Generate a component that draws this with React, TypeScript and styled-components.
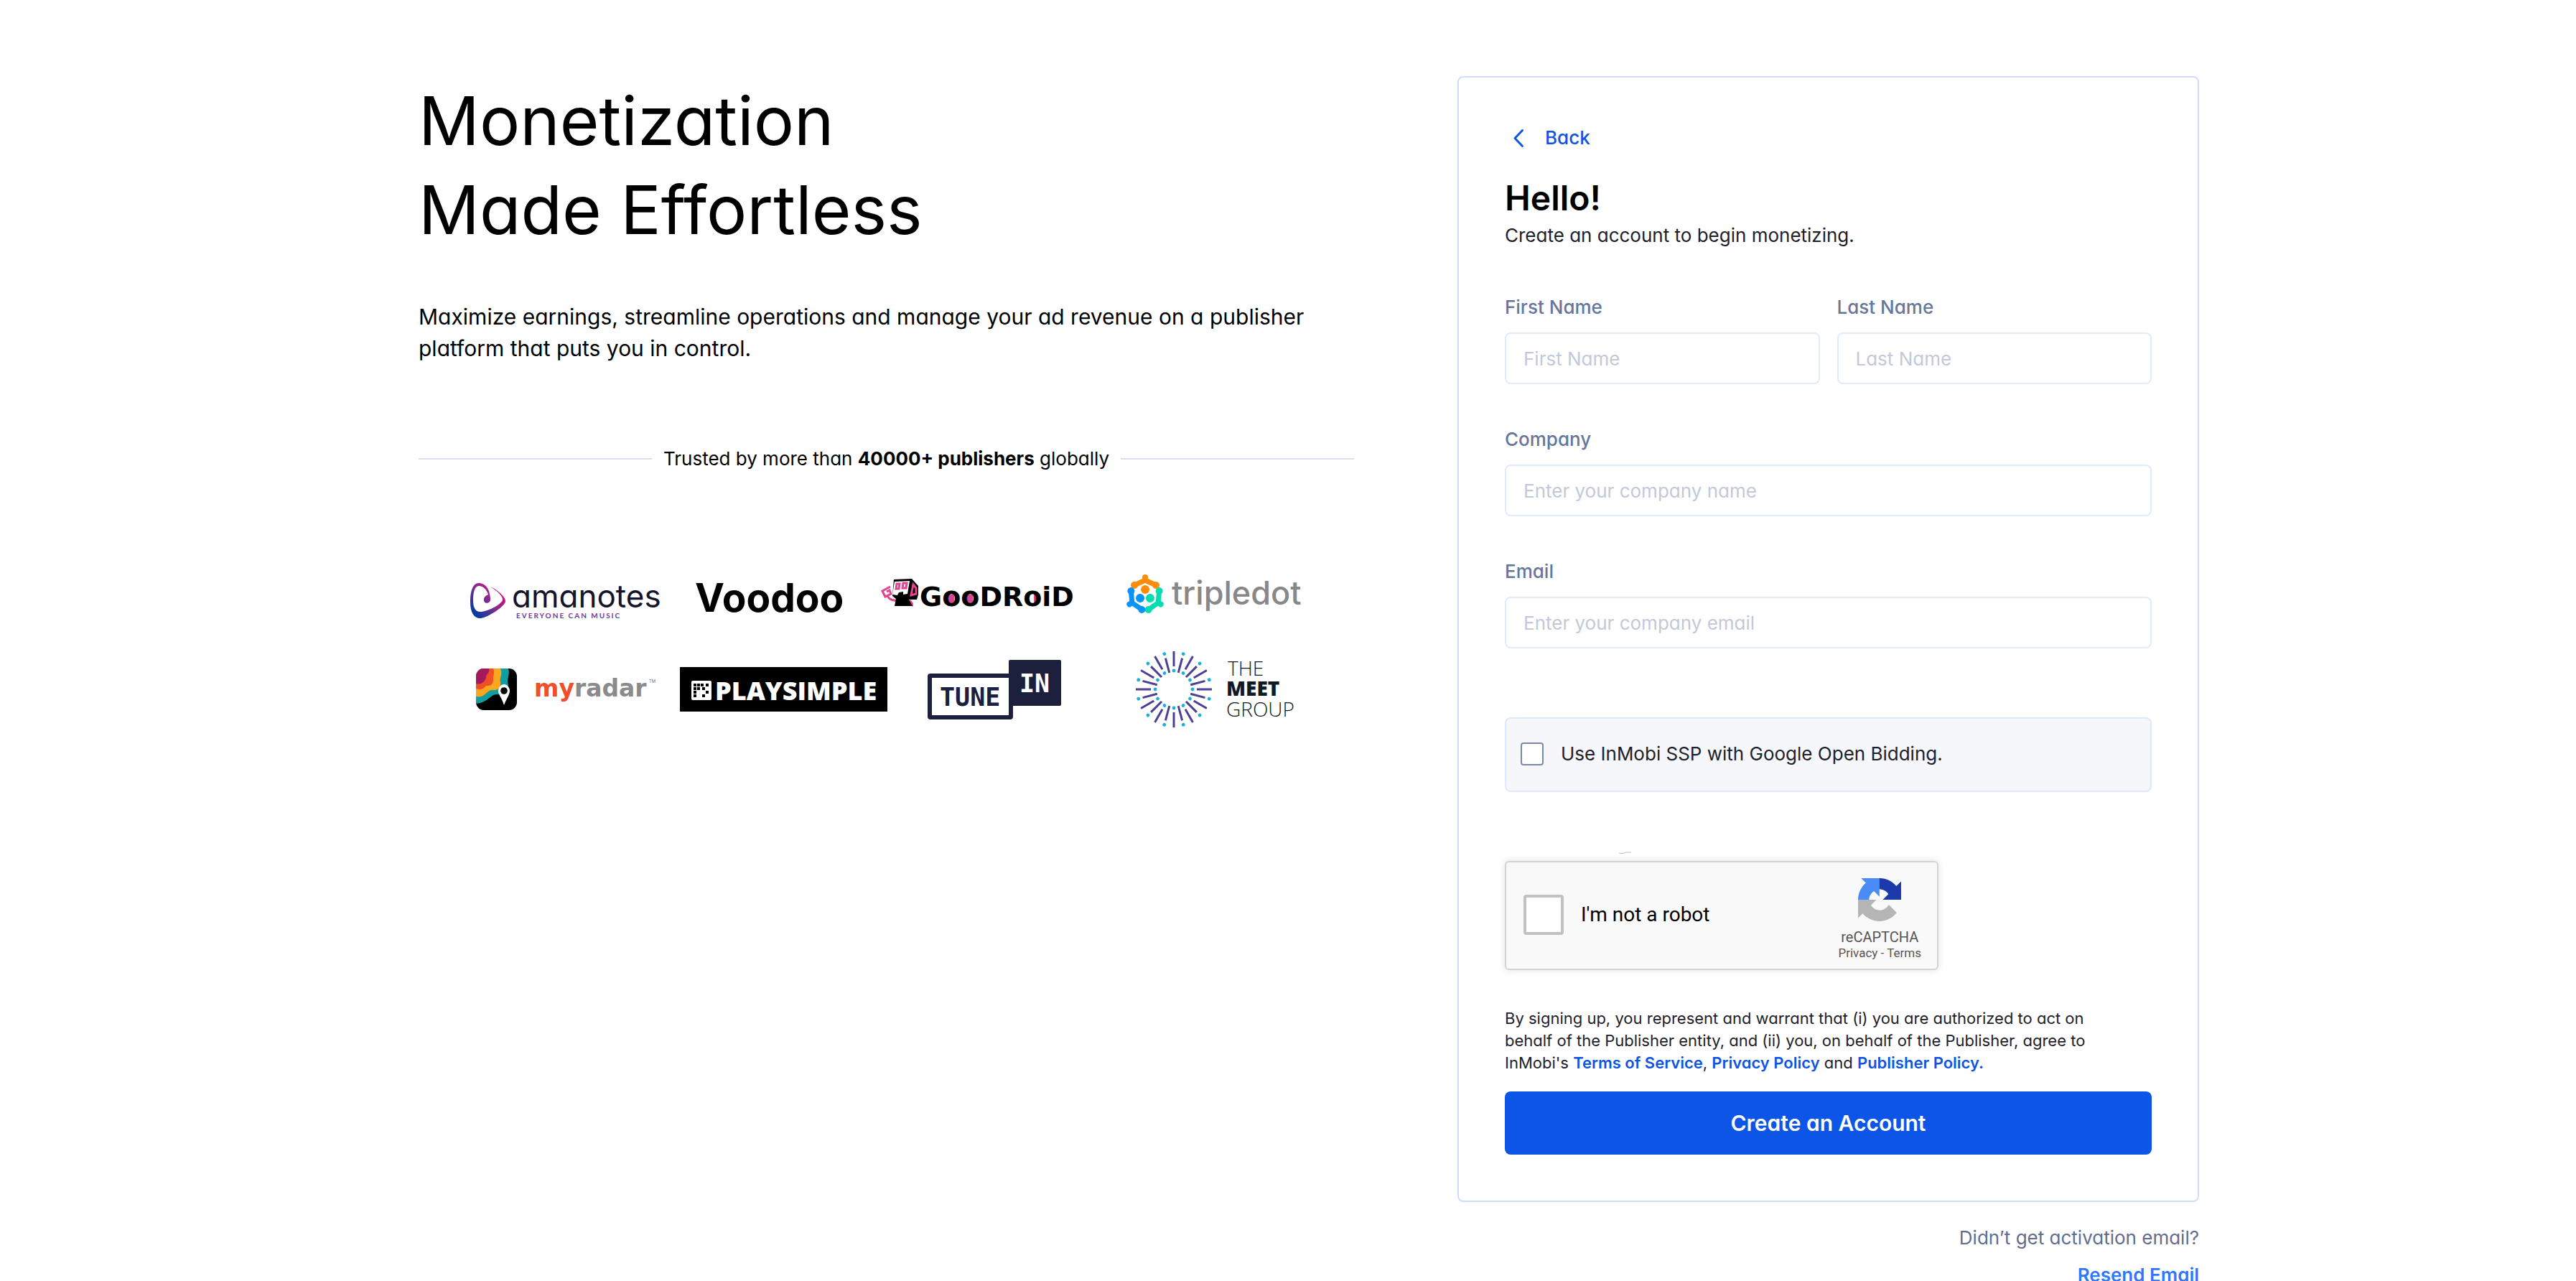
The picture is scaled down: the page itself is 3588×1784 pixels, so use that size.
import React from "react";
import styled, { createGlobalStyle } from "styled-components";

const GlobalStyle = createGlobalStyle`
  *, *::before, *::after { box-sizing: border-box; }
  body {
    margin: 0;
    background: #fff;
    color: #000;
    font-family: Inter, "Liberation Sans", sans-serif;
    font-feature-settings: "cv11";
    font-size: 26px;
    line-height: 40px;
  }
  h1, h2, p { margin: 0; }
`;

const Page = styled.main`
  display: grid;
  grid-template-columns: minmax(0, 1303fr) minmax(0, 1033fr);
  column-gap: 144px;
  max-width: 2538px;
  margin: 0 auto;
  padding: 106px 0 0 58px;
  align-items: start;
`;

const Intro = styled.section`
  display: flex;
  flex-direction: column;
`;

const Headline = styled.h1`
  font-size: 94px;
  font-weight: 400;
  line-height: 124px;
`;

const Lead = styled.p`
  margin-top: 65px;
  font-size: 30px;
  line-height: 44px;
`;

const Trusted = styled.p`
  display: flex;
  align-items: center;
  gap: 16px;
  margin-top: 112px;
  white-space: nowrap;

  &::before,
  &::after {
    content: "";
    flex: 1;
    height: 2px;
    background: #dcdeea;
  }
`;

const LogoGrid = styled.div`
  display: grid;
  grid-template-columns: repeat(4, 300px);
  justify-content: center;
  row-gap: 10px;
  margin-top: 111px;
`;

const LogoArt = styled.svg`
  display: block;
  width: 100%;
  overflow: visible;
`;

const Card = styled.form`
  display: flex;
  flex-direction: column;
  padding: 64px;
  border: 2px solid #d0dcfd;
  border-radius: 8px;
`;

const BackLink = styled.a`
  display: flex;
  align-items: center;
  gap: 20px;
  align-self: flex-start;
  padding-left: 4px;
  color: #0d55e6;
  font-weight: 500;
  text-decoration: none;
`;

const Greeting = styled.h2`
  margin-top: 36px;
  font-size: 48px;
  font-weight: 600;
  line-height: 56px;
`;

const Subtitle = styled.p`
  margin-top: 4px;
  color: #1d212c;
`;

const Fields = styled.div`
  display: grid;
  grid-template-columns: 1fr 1fr;
  gap: 57px 24px;
  margin-top: 60px;
`;

const FieldBox = styled.div<{ $wide?: boolean }>`
  display: flex;
  flex-direction: column;
  gap: 15px;
  grid-column: ${(p) => (p.$wide ? "1 / -1" : "auto")};
`;

const FieldLabel = styled.label`
  color: #67769b;
  font-weight: 500;
`;

const TextInput = styled.input`
  width: 100%;
  height: 72px;
  padding: 0 24px;
  border: 2px solid #e2eafd;
  border-radius: 8px;
  background: #fff;
  color: #1d212c;
  font: inherit;
  font-feature-settings: inherit;

  &::placeholder {
    color: #c2c9d8;
    opacity: 1;
  }
`;

const BiddingOption = styled.label`
  display: flex;
  align-items: center;
  gap: 24px;
  height: 104px;
  margin-top: 96px;
  padding: 0 20px 2px;
  border: 2px solid #dfe8fd;
  border-radius: 8px;
  background: #f5f7fb;
  color: #1d212c;
`;

const Tick = styled.input<{ $large?: boolean }>`
  appearance: none;
  flex: none;
  width: ${(p) => (p.$large ? 56 : 32)}px;
  height: ${(p) => (p.$large ? 56 : 32)}px;
  margin: 0;
  border: ${(p) => (p.$large ? "4px solid #c1c1c1" : "2px solid #7b89a9")};
  border-radius: 4px;
  background: #fff;
`;

const Captcha = styled.div`
  position: relative;
  display: flex;
  align-items: center;
  justify-content: space-between;
  width: 604px;
  max-width: 100%;
  height: 152px;
  margin-top: 96px;
  padding: 0 22px 0 24px;
  border: 2px solid #d3d3d3;
  border-radius: 6px;
  background: #f9f9f9;
  box-shadow: 0 0 8px 2px rgba(0, 0, 0, 0.08);
  font-family: Roboto, "Liberation Sans", sans-serif;
`;

const CaptchaHint = styled.svg`
  position: absolute;
  left: 156px;
  top: -16px;
`;

const CaptchaLabel = styled.label`
  display: flex;
  align-items: center;
  gap: 24px;
  padding-bottom: 2px;
  font-size: 28px;
`;

const CaptchaBrand = styled.div`
  display: flex;
  flex-direction: column;
  align-items: center;
  padding-top: 10px;
  color: #555;
  font-size: 20px;
  line-height: 24px;

  svg { display: block; margin-bottom: 10px; }
`;

const CaptchaLinks = styled.span`
  font-size: 17px;
  line-height: 20px;

  a { color: inherit; text-decoration: none; }
`;

const Legal = styled.p`
  margin-top: 52px;
  padding-right: 32px;
  color: #1d212c;
  font-size: 22px;
  line-height: 31px;
`;

const LegalLink = styled.a`
  color: #0d55e6;
  font-weight: 600;
  text-decoration: none;
`;

const SubmitButton = styled.button`
  height: 88px;
  margin-top: 24px;
  border: 0;
  border-radius: 8px;
  background: #0d55e6;
  color: #fff;
  font: inherit;
  font-feature-settings: inherit;
  font-size: 30px;
  font-weight: 600;
`;

const Resend = styled.p`
  display: flex;
  flex-direction: column;
  align-items: flex-end;
  margin-top: 24px;
  color: #5f6e90;
  line-height: 52px;
`;

const ResendLink = styled.a`
  color: #3177fa;
  font-weight: 600;
  text-decoration: none;
`;

const Logo = ({ name, children }: { name: string; children: React.ReactNode }) => (
  <LogoArt viewBox="0 0 300 120" role="img" aria-label={name}>
    {children}
  </LogoArt>
);

const Amanotes = () => (
  <Logo name="amanotes">
    <defs>
      <linearGradient id="ama" x1="0.9" y1="0.1" x2="0.15" y2="0.85">
        <stop offset="0" stopColor="#f0047f" />
        <stop offset="0.5" stopColor="#8a2a8e" />
        <stop offset="1" stopColor="#0c3c9c" />
      </linearGradient>
      <linearGradient id="amaTag" x1="0" y1="0" x2="0" y2="1">
        <stop offset="0.2" stopColor="#b12a8b" />
        <stop offset="0.8" stopColor="#2a4aa8" />
      </linearGradient>
    </defs>
    <path
      fill="url(#ama)"
      fillRule="evenodd"
      d="M31 42C40 41 46 50 47 57C48 63 49 66 47 68C43 72 38 69 39 64C40 60 43 59 45 58C43 51 38 46 32 46C26 46 24 56 24 66C24 76 27 83 36 82C48 80 62 72 65 66C66 61 58 53 49 48C53 48 69 60 69 67C69 74 46 89 35 91C26 92 20 84 20 68C20 54 23 43 31 42Z"
    />
    <text x="78" y="76" fontSize="44" fontWeight="400" fill="#14142b">amanotes</text>
    <text x="84" y="91" fontFamily="Lato, sans-serif" fontSize="10" fontWeight="700" letterSpacing="2" fill="url(#amaTag)">EVERYONE CAN MUSIC</text>
  </Logo>
);

const Voodoo = () => (
  <Logo name="Voodoo">
    <text x="33" y="82" fontSize="55" fontWeight="700">Voodoo</text>
  </Logo>
);

const Goodroid = () => (
  <Logo name="GooDRoiD">
    <g fill="none" stroke="#e5428f" strokeWidth="3">
      <path d="M5 47L-6 53L-2 61L6 57L4 52L0 54" />
      <path d="M1 60Q5 67 14 66M32 66Q37 71 35 74" />
    </g>
    <path d="M10 37L35 36L44 46V58L42 65H31L36 74H11L13 64L8 60Z" />
    <path fill="#fff" d="M11 40L32 39L29 57L23 58V54L17 55L15 59L8 58Z" />
    <path fill="none" stroke="#e5428f" strokeWidth="3" d="M14 43H18L17 50H13ZM23 42H28L27 49H22ZM37 44L41 49V57L34 59Z" />
    <path fill="#d94690" d="M86 58h8v12h-8zM112 58h8v12h-8zM205 58h8v12h-8z" />
    <text x="46" y="74" fontFamily="DejaVu Sans, sans-serif" fontSize="38" fontWeight="700">GooDRoiD</text>
  </Logo>
);

const Tripledot = () => {
  const arm = "M60 38L45 45M60 38L75 45M60 38L60 36";
  return (
    <Logo name="tripledot">
      {[
        ["#ff8b0b", 0],
        ["#05dcb1", 120],
        ["#0795fb", 240],
      ].map(([color, angle]) => (
        <g key={color} transform={`rotate(${angle} 60 59)`} stroke={color as string} fill={color as string}>
          <path d={arm} strokeWidth="7" strokeLinecap="round" strokeLinejoin="round" />
          <circle cx="60" cy="34" r="4" stroke="none" />
          <circle cx="45" cy="45" r="5" stroke="none" />
          <circle cx="75" cy="45" r="5" stroke="none" />
          <circle cx="60" cy="51" r="6" stroke="none" />
        </g>
      ))}
      <text x="97" y="72" fontSize="45" fontWeight="500" fill="#888">tripledot</text>
    </Logo>
  );
};

const MyRadar = () => (
  <Logo name="myradar">
    <defs>
      <clipPath id="radarTile">
        <rect x="28" y="31" width="57" height="58" rx="11" />
      </clipPath>
    </defs>
    <g clipPath="url(#radarTile)">
      <path d="M28 31h57v58H28z" />
      <path fill="#0f9ea2" d="M28 31H73C76 39 70 46 73 54C74 63 68 68 58 67C48 66 46 78 28 80Z" />
      <path fill="#faa61f" d="M28 31H62C66 39 60 44 62 50C63 58 58 62 50 61C43 61 40 73 28 70Z" />
      <path fill="#f04e23" d="M28 31H52C55 38 51 42 52 47C52 55 46 55 42 55C38 60 34 61 28 59Z" />
      <path fill="#a3195b" d="M28 31H46C48 37 41 39 42 44C40 50 35 54 28 52Z" />
      <path fill="#fff" d="M67 53C71 53 75 57 75 62C75 67 71 72 67 82C64 72 59 67 59 62C59 57 63 53 67 53Z" />
      <circle cx="67" cy="62" r="4.800" />
    </g>
    <text x="109" y="70" fontFamily="DejaVu Sans, sans-serif" fontSize="33" fontWeight="700" fill="#f04e29">
      my<tspan fill="#8b8b8b">radar</tspan>
    </text>
    <text x="269" y="51" fontSize="6" fill="#777">TM</text>
  </Logo>
);

const PlaySimple = () => (
  <Logo name="PLAYSIMPLE">
    <path d="M12 29h289v62H12z" />
    <rect x="28" y="48" width="28" height="27" rx="2" fill="#fff" />
    <path d="M31 52h4v4h-4zM36 52h4v4h-4zM41 52h4v4h-4zM48 52h4v4h-4zM31 57h4v4h-4zM36 57h4v4h-4zM43 57h4v4h-4zM31 62h4v4h-4zM48 62h4v4h-4zM31 67h4v4h-4zM43 67h4v4h-4z" />
    <text x="61" y="75" fontFamily="Open Sans, sans-serif" fontSize="36" fontWeight="800" fill="#fff">PLAYSIMPLE</text>
  </Logo>
);

const TuneIn = () => (
  <Logo name="TUNE IN">
    <rect x="60" y="41" width="113" height="58" rx="1" fill="#fff" stroke="#1c203c" strokeWidth="6" />
    <rect x="170" y="19" width="73" height="64" rx="2" fill="#1c203c" />
    <g fontFamily="DejaVu Sans Mono, monospace" fontSize="35" fontWeight="700">
      <text x="74" y="83" fill="#1c203c">TUNE</text>
      <text x="185" y="64" fill="#fff">IN</text>
    </g>
  </Logo>
);

const MeetGroup = () => (
  <Logo name="THE MEET GROUP">
    {Array.from({ length: 24 }, (_, i) => {
      const even = i % 2 === 0;
      return (
        <g key={i} transform={`rotate(${i * 15} 100 60)`}>
          <path d={even ? "M100 7V28" : "M100 15V36"} stroke="#4c4096" strokeWidth="3" />
          <circle cx="100" cy={even ? 34 : 9} r="2.400" fill="#1ab0dc" />
        </g>
      );
    })}
    <g fontFamily="Open Sans, sans-serif" fontSize="28" fontWeight="300" fill="#101a22">
      <text x="175" y="41">THE</text>
      <text x="173" y="69" fontWeight="800">MEET</text>
      <text x="173" y="98">GROUP</text>
    </g>
  </Logo>
);

interface FieldProps {
  id: string;
  label: string;
  placeholder: string;
  type?: string;
  wide?: boolean;
}

const Field = ({ id, label, placeholder, type = "text", wide }: FieldProps) => (
  <FieldBox $wide={wide}>
    <FieldLabel htmlFor={id}>{label}</FieldLabel>
    <TextInput id={id} type={type} placeholder={placeholder} />
  </FieldBox>
);

export default function App() {
  return (
    <>
      <GlobalStyle />
      <Page>
        <Intro>
          <Headline>
            Monetization
            <br />
            Made Effortless
          </Headline>
          <Lead>
            Maximize earnings, streamline operations and manage your ad revenue on a publisher platform that puts you in
            control.
          </Lead>
          <Trusted>
            <span>
              Trusted by more than <b>40000+ publishers</b> globally
            </span>
          </Trusted>
          <LogoGrid>
            <Amanotes />
            <Voodoo />
            <Goodroid />
            <Tripledot />
            <MyRadar />
            <PlaySimple />
            <TuneIn />
            <MeetGroup />
          </LogoGrid>
        </Intro>

        <div>
          <Card onSubmit={(e) => e.preventDefault()}>
            <BackLink href="#back">
              <svg width="32" height="32" viewBox="0 0 32 32" fill="none" aria-hidden="true">
                <path d="M20.500 5.500L10 16.500L20.500 27.500" stroke="currentColor" strokeWidth="3" strokeLinecap="round" strokeLinejoin="round" />
              </svg>
              Back
            </BackLink>
            <Greeting>Hello!</Greeting>
            <Subtitle>Create an account to begin monetizing.</Subtitle>

            <Fields>
              <Field id="first-name" label="First Name" placeholder="First Name" />
              <Field id="last-name" label="Last Name" placeholder="Last Name" />
              <Field id="company" label="Company" placeholder="Enter your company name" wide />
              <Field id="email" label="Email" placeholder="Enter your company email" type="email" wide />
            </Fields>

            <BiddingOption>
              <Tick type="checkbox" />
              Use InMobi SSP with Google Open Bidding.
            </BiddingOption>

            <Captcha>
              <CaptchaHint width="20" height="6" viewBox="0 0 20 6" fill="none" aria-hidden="true">
                <path d="M1 3Q6 5 11 2H18" stroke="#bdbdbd" strokeWidth="1" />
              </CaptchaHint>
              <CaptchaLabel>
                <Tick type="checkbox" $large />
                I'm not a robot
              </CaptchaLabel>
              <CaptchaBrand>
                <svg width="60" height="60" viewBox="0 0 64 64" aria-hidden="true">
                  <path fill="#1c3aa9" d="M64 31.955l-.033-1.370V4.687l-7.160 7.160C50.948 4.674 42.033.093 32.050.093c-10.400 0-19.622 4.960-25.458 12.640l11.736 11.860a15.550 15.550 0 0 1 4.754-5.334c2.050-1.600 4.952-2.906 8.968-2.906.485 0 .860.057 1.135.163 4.976.393 9.288 3.140 11.828 7.124l-8.307 8.307L64 31.953" />
                  <path fill="#4a8cf7" d="M31.862.094l-1.370.033H4.594l7.160 7.160C4.580 13.147 0 22.060 0 32.046c0 10.400 4.960 19.622 12.640 25.458L24.500 45.768a15.550 15.550 0 0 1-5.334-4.754c-1.600-2.050-2.906-4.952-2.906-8.968 0-.485.057-.860.163-1.135.393-4.976 3.140-9.288 7.124-11.828l8.307 8.307L31.860.095" />
                  <path fill="#b5b5b5" d="M.001 32.045l.033 1.370v25.898l7.160-7.160c5.860 7.173 14.774 11.754 24.760 11.754 10.400 0 19.622-4.960 25.458-12.640l-11.736-11.860a15.550 15.550 0 0 1-4.754 5.334c-2.050 1.600-4.952 2.906-8.968 2.906-.485 0-.860-.057-1.135-.163-4.976-.393-9.288-3.140-11.828-7.124l8.307-8.307c-10.522.040-22.400.066-27.295-.005" />
                </svg>
                reCAPTCHA
                <CaptchaLinks>
                  <a href="#captcha-privacy">Privacy</a> - <a href="#captcha-terms">Terms</a>
                </CaptchaLinks>
              </CaptchaBrand>
            </Captcha>

            <Legal>
              By signing up, you represent and warrant that (i) you are authorized to act on behalf of the Publisher
              entity, and (ii) you, on behalf of the Publisher, agree to InMobi's{" "}
              <LegalLink href="#terms">Terms of Service</LegalLink>, <LegalLink href="#privacy">Privacy Policy</LegalLink>{" "}
              and <LegalLink href="#publisher">Publisher Policy.</LegalLink>
            </Legal>
            <SubmitButton type="submit">Create an Account</SubmitButton>
          </Card>
          <Resend>
            Didn’t get activation email?
            <ResendLink href="#resend">Resend Email</ResendLink>
          </Resend>
        </div>
      </Page>
    </>
  );
}
